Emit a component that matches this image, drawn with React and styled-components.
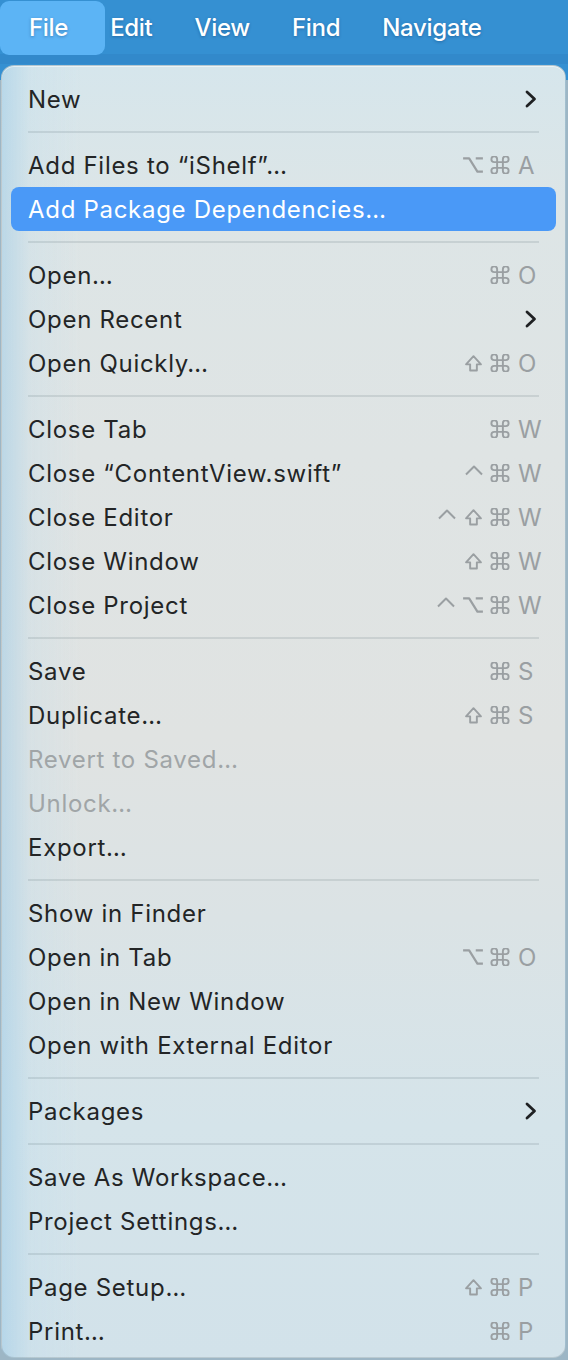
import styled, { createGlobalStyle } from "styled-components";

const GlobalStyle = createGlobalStyle`
  html, body {
    margin: 0;
    padding: 0;
  }

  body {
    width: 568px;
    height: 1360px;
    overflow: hidden;
    background: linear-gradient(#3590d2 0, #3590d2 80px, #9db6c5 80px);
    font-family: Inter, "Noto Sans", "Liberation Sans", sans-serif;
    -webkit-font-smoothing: antialiased;
  }
`;

const Screen = styled.div`
  display: flex;
  flex-direction: column;
  height: 1360px;
`;

const MenuBar = styled.div`
  display: flex;
  align-items: center;
  gap: 42px;
  height: 54px;
  padding: 0 0 0 29px;
  margin-bottom: 11px;
  flex-shrink: 0;
  background: #3590d2;
  box-shadow: 0 10px 0 #3289cb;
`;

const MenuTitle = styled.div`
  position: relative;
  z-index: 0;
  font-size: 24px;
  font-weight: 500;
  letter-spacing: -0.3px;
  color: #fff;
  text-shadow: 0 1px 3px rgba(0, 40, 90, 0.35);

  &::before {
    content: "";
    display: ${(p) => (p.$active ? "block" : "none")};
    position: absolute;
    z-index: -1;
    left: -29px;
    right: -37px;
    top: -12px;
    bottom: -13px;
    border-radius: 9px;
    background: #5cb4f5;
  }
`;

const Menu = styled.div`
  display: flex;
  flex-direction: column;
  flex: 1;
  margin: 0 2px 2px 1px;
  padding: 11px 9px 4px 9px;
  border-radius: 13px;
  border: 1px solid rgba(60, 80, 90, 0.18);
  background:
    linear-gradient(90deg, rgba(160, 205, 232, 0.55) 0, rgba(190, 220, 236, 0.25) 5%, rgba(255, 255, 255, 0) 14%),
    linear-gradient(180deg, #d6e6ec 0%, #dde5e6 12%, #dfe4e4 30%, #e0e3e2 52%, #dbe3e5 66%, #d5e4ea 82%, #d2e2ea 100%);
  box-shadow: inset 0 1px 0 rgba(255, 255, 255, 0.5);
`;

const Row = styled.div`
  display: flex;
  align-items: center;
  height: 44px;
  padding: 0 0 0 17px;
  border-radius: 8px;
  font-size: 24px;
  letter-spacing: 0.7px;
  color: ${(p) => (p.$selected ? "#ffffff" : p.$disabled ? "#a0a5a7" : "#232526")};
  background: ${(p) => (p.$selected ? "#4a99f7" : "transparent")};
`;

const Label = styled.span`
  flex: 1;
  white-space: nowrap;
`;

const Separator = styled.div`
  height: 2px;
  margin: 10px 17px 10px 17px;
  background: rgba(70, 90, 100, 0.14);
`;

const Shortcut = styled.div`
  display: flex;
  align-items: center;
  color: #9a9fa2;
`;

const Modifiers = styled.div`
  display: flex;
  align-items: center;
  gap: 6px;
`;

const KeyLetter = styled.span`
  width: 46px;
  padding-left: 8px;
  box-sizing: border-box;
  font-size: 24px;
  letter-spacing: 0;
`;

const Chevron = styled.svg`
  width: 12px;
  height: 18px;
  margin-right: 19px;
`;

const Glyph = styled.svg`
  display: block;
  width: ${(p) => p.$w || 21}px;
  height: 18px;
  fill: none;
  stroke: #9a9fa2;
  stroke-width: 2;
  stroke-linecap: round;
  stroke-linejoin: round;
`;

function Cmd() {
  return (
    <Glyph viewBox="2.6 2.6 18.8 18.8" $w={20}>
      <path d="M15 6v12a3 3 0 1 0 3-3H6a3 3 0 1 0 3 3V6a3 3 0 1 0-3 3h12a3 3 0 1 0-3-3" />
    </Glyph>
  );
}

function Opt() {
  return (
    <Glyph viewBox="2 4 20 16" $w={22}>
      <path d="M3 6h5.5l7.5 12h5M14.5 6H21" strokeLinecap="butt" />
    </Glyph>
  );
}

function Shift() {
  return (
    <Glyph viewBox="2.6 2.2 18.8 18.8" $w={21}>
      <path d="M8.5 19.5v-6.5H4.2L12 4.5l7.8 8.5h-4.3v6.5z" />
    </Glyph>
  );
}

function Ctrl() {
  return (
    <Glyph viewBox="2 2 20 18" $w={20}>
      <path d="M4 12.5 12 4.5l8 8" strokeLinecap="butt" />
    </Glyph>
  );
}

const modifierIcons = { ctrl: Ctrl, opt: Opt, shift: Shift, cmd: Cmd };

function SubmenuArrow() {
  return (
    <Chevron viewBox="0 0 12 18">
      <path d="M2 2l7.5 7-7.5 7" fill="none" stroke="#1f2123" strokeWidth="2.8" strokeLinecap="round" strokeLinejoin="round" />
    </Chevron>
  );
}

const sections = [
  [{ label: "New", submenu: true }],
  [
    { label: "Add Files to “iShelf”…", mods: ["opt", "cmd"], key: "A" },
    { label: "Add Package Dependencies…", selected: true },
  ],
  [
    { label: "Open…", mods: ["cmd"], key: "O" },
    { label: "Open Recent", submenu: true },
    { label: "Open Quickly…", mods: ["shift", "cmd"], key: "O" },
  ],
  [
    { label: "Close Tab", mods: ["cmd"], key: "W" },
    { label: "Close “ContentView.swift”", mods: ["ctrl", "cmd"], key: "W" },
    { label: "Close Editor", mods: ["ctrl", "shift", "cmd"], key: "W" },
    { label: "Close Window", mods: ["shift", "cmd"], key: "W" },
    { label: "Close Project", mods: ["ctrl", "opt", "cmd"], key: "W" },
  ],
  [
    { label: "Save", mods: ["cmd"], key: "S" },
    { label: "Duplicate…", mods: ["shift", "cmd"], key: "S" },
    { label: "Revert to Saved…", disabled: true },
    { label: "Unlock…", disabled: true },
    { label: "Export…" },
  ],
  [
    { label: "Show in Finder" },
    { label: "Open in Tab", mods: ["opt", "cmd"], key: "O" },
    { label: "Open in New Window" },
    { label: "Open with External Editor" },
  ],
  [{ label: "Packages", submenu: true }],
  [{ label: "Save As Workspace…" }, { label: "Project Settings…" }],
  [
    { label: "Page Setup…", mods: ["shift", "cmd"], key: "P" },
    { label: "Print…", mods: ["cmd"], key: "P" },
  ],
];

function MenuItem({ item }) {
  return (
    <Row $selected={item.selected} $disabled={item.disabled}>
      <Label>{item.label}</Label>
      {item.submenu && <SubmenuArrow />}
      {item.key && (
        <Shortcut>
          <Modifiers>
            {item.mods.map((m) => {
              const Icon = modifierIcons[m];
              return <Icon key={m} />;
            })}
          </Modifiers>
          <KeyLetter>{item.key}</KeyLetter>
        </Shortcut>
      )}
    </Row>
  );
}

export default function App() {
  return (
    <>
      <GlobalStyle />
      <Screen>
        <MenuBar>
          <MenuTitle $active>File</MenuTitle>
          <MenuTitle>Edit</MenuTitle>
          <MenuTitle>View</MenuTitle>
          <MenuTitle>Find</MenuTitle>
          <MenuTitle>Navigate</MenuTitle>
        </MenuBar>
        <Menu>
          {sections.map((section, i) => (
            <div key={i}>
              {i > 0 && <Separator />}
              {section.map((item) => (
                <MenuItem key={item.label} item={item} />
              ))}
            </div>
          ))}
        </Menu>
      </Screen>
    </>
  );
}
